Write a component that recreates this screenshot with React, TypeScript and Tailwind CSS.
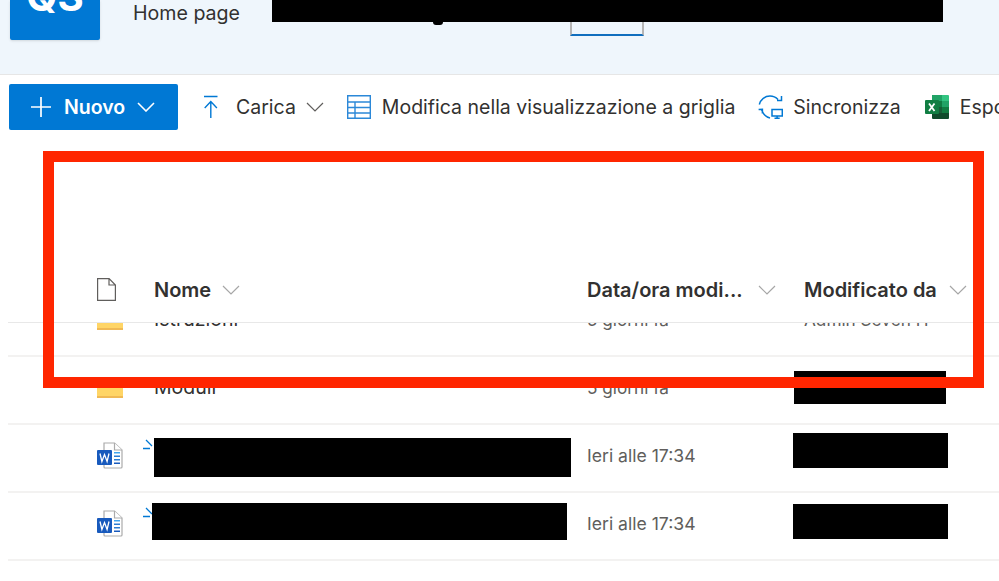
const font = { fontFamily: "Inter, 'Noto Sans', sans-serif" };

const Caret = ({ className = "", width = 1.2 }: { className?: string; width?: number }) => (
  <svg viewBox="0 0 18 10" className={`h-[10px] w-[18px] shrink-0 ${className}`} fill="none" stroke="currentColor" strokeWidth={width}>
    <path d="M1 1l8 8 8-8" />
  </svg>
);

const PlusIcon = () => (
  <svg viewBox="0 0 20 20" className="h-[20px] w-[20px] shrink-0" fill="none" stroke="#fff" strokeWidth="1.7">
    <path d="M10 0v20M0 10h20" />
  </svg>
);

const UploadIcon = () => (
  <svg viewBox="0 0 16 24" className="h-[24px] w-[16px] shrink-0" fill="none" stroke="#0078d4" strokeWidth="1.4">
    <path d="M1 1.500h13.500M7.800 23V6.500M1.700 13l6.100-6.500 6.100 6.500" />
  </svg>
);

const GridIcon = () => (
  <svg viewBox="0 0 24 24" className="h-[24px] w-[24px] shrink-0" fill="none" stroke="#2b88d8" strokeWidth="1.400">
    <path d="M.7.7h22.600v22.600H.7zM.7 7h22.600M.7 12.500h22.600M.7 18h22.600M8 7v16.300" />
  </svg>
);

const SyncIcon = () => (
  <svg viewBox="0 0 25 24" className="h-[24px] w-[25px] shrink-0" fill="none" stroke="#0078d4" strokeWidth="1.500">
    <path d="M1.300 9.500C2.600 4.300 7 1 12 1c3.200 0 5.800 1.200 8 3.500M23.500 1v4.500h-4.500M.6 14.500l3.800-.2v4.200M3.700 15c1.500 4 4.200 7 8.300 8" />
    <path d="M14 14.500h10.300v6.500H14zM19.100 21v2.500M16.500 23.300h5.200" />
  </svg>
);

const ExcelIcon = () => (
  <svg viewBox="0 0 24 24" className="h-[24px] w-[24px] shrink-0">
    <path fill="#21a366" d="M7 0h10v6H7z" />
    <path fill="#33c481" d="M17 0h6a1 1 0 0 1 1 1v5h-7z" />
    <path fill="#107c41" d="M7 6h10v6H7z" />
    <path fill="#21a366" d="M17 6h7v6h-7z" />
    <path fill="#185c37" d="M7 12h10v6H7z" />
    <path fill="#107c41" d="M17 12h7v6h-7z" />
    <path fill="#0f4a2b" d="M7 18h17v5a1 1 0 0 1-1 1H8a1 1 0 0 1-1-1z" />
    <rect y="5" width="14" height="14" rx="1" fill="#117e43" />
    <path fill="none" stroke="#fff" strokeWidth="1.800" d="M4 8.500l5.500 7.500M9.500 8.500L4 16" />
  </svg>
);

const WordIcon = () => (
  <svg viewBox="0 0 26 27" className="h-[27px] w-[26px]" fill="none">
    <path d="M7 1h10.500L25 8v17a1 1 0 0 1-1 1H8a1 1 0 0 1-1-1z" fill="#fff" stroke="#ababab" strokeWidth="1.200" />
    <path d="M17.500 1v7H25" fill="#fff" stroke="#ababab" strokeWidth="1.200" />
    <path d="M17 10h6v1.500h-6z" fill="#41a5ee" />
    <path d="M17 13.500h6V15h-6zM17 17h6v1.500h-6z" fill="#2b7cd3" />
    <path d="M17 20.500h6V22h-6z" fill="#185abd" />
    <rect y="8" width="15" height="15" rx="1" fill="#185abd" />
    <path d="M3 11.500l1.900 8 2.600-7 2.600 7 1.900-8" stroke="#fff" strokeWidth="1.300" />
  </svg>
);

const FolderIcon = () => (
  <div className="mb-[6px] ml-[89px] flex h-[26px] w-[26px] flex-col justify-end overflow-hidden">
    <div className="h-[19px] rounded-t-[2px] border-b-2 border-[#f0b954] bg-[#ffd566]" />
  </div>
);

const NewMark = () => (
  <svg viewBox="0 0 12 12" className="absolute left-[135px] top-[13px] h-[12px] w-[12px]" fill="none" stroke="#0078d4" strokeWidth="1.300">
    <path d="M0 10.500h7M3 2l6 6" />
  </svg>
);

const Redact = ({ className }: { className: string }) => <div className={`absolute bg-black ${className}`} />;

const rows = [
  { kind: "folder", name: "Istruzioni", date: "5 giorni fa", author: "Admin Seven H" },
  { kind: "folder", name: "Moduli", date: "5 giorni fa", author: "" },
  { kind: "word", name: "", date: "Ieri alle 17:34", author: "" },
  { kind: "word", name: "", date: "Ieri alle 17:34", author: "" },
];

export default function App() {
  return (
    <div style={font} className="relative h-[581px] w-[999px] overflow-hidden bg-white text-[#323130]">
      <header className="relative flex h-[75px] items-start border-b border-[#e6e6e6] bg-[#eff6fc]">
        <div className="ml-[10px] flex h-[40px] w-[90px] items-end justify-center overflow-hidden rounded-b-[2px] bg-[#0078d4] pb-[23px] shadow-sm">
          <span className="text-[40px] font-bold leading-none text-white">QS</span>
        </div>
        <span className="ml-[33px] mt-[1px] text-[19.6px] leading-[24px]">Home page</span>
        <div className="ml-[330px] h-[36px] w-[74px] border-x-2 border-b-2 border-x-[#b5b5b5] border-b-[#106ebe]" />
        <Redact className="left-[272px] top-0 h-[22px] w-[671px]" />
        <Redact className="left-[433px] top-[22px] h-[3px] w-[10px] rounded-b-full" />
      </header>

      <div className="flex h-[64px] items-center whitespace-nowrap pl-[9px] text-[19.5px]">
        <button className="flex h-[46px] w-[169px] shrink-0 items-center rounded-[2px] bg-[#0078d4] pl-[22px] font-semibold text-white">
          <PlusIcon />
          <span className="ml-[13px] mt-[2px]">Nuovo</span>
          <Caret className="ml-[12px]" width={1.6} />
        </button>
        <div className="ml-[25px] flex shrink-0 items-center">
          <UploadIcon />
          <span className="ml-[17px] mt-[2px]">Carica</span>
          <Caret className="ml-[10px] text-[#605e5c]" />
        </div>
        <div className="ml-[23px] flex shrink-0 items-center">
          <GridIcon />
          <span className="ml-[11px] mt-[2px]">Modifica nella visualizzazione a griglia</span>
        </div>
        <div className="ml-[23px] flex shrink-0 items-center">
          <SyncIcon />
          <span className="ml-[10px] mt-[2px]">Sincronizza</span>
        </div>
        <div className="ml-[24px] flex shrink-0 items-center">
          <ExcelIcon />
          <span className="ml-[11px] mt-[2px]">Esporta</span>
        </div>
      </div>

      <main className="pl-[8px]">
        <div className="relative z-10 grid h-[184px] grid-cols-[146px_433px_217px_1fr] items-end border-b border-[#e8e8e8] bg-white pb-[18px] text-[20px] font-semibold leading-[28px]">
          <svg viewBox="0 0 19 23" className="mb-[3px] ml-[89px] h-[23px] w-[19px]" fill="none" stroke="#605e5c" strokeWidth="1.200">
            <path d="M.6.6h11.500L18.400 7v15.400H.6zM12 .6V7h6.400" />
          </svg>
          <div className="flex items-center">
            Nome
            <Caret className="ml-[11px] text-[#a6a6a6]" />
          </div>
          <div className="flex items-center">
            Data/ora modi...
            <Caret className="ml-[15px] text-[#a6a6a6]" />
          </div>
          <div className="flex items-center">
            Modificato da
            <Caret className="ml-[12px] text-[#a6a6a6]" />
          </div>
        </div>

        <div className="-mt-[34px]">
          {rows.map((row, i) => (
            <div key={i} className="relative grid h-[68px] grid-cols-[146px_433px_217px_1fr] items-center border-b-2 border-[#f3f2f1] pb-[4px]">
              {row.kind === "folder" ? (
                <FolderIcon />
              ) : (
                <div className="mb-[2px] ml-[89px]">
                  <WordIcon />
                </div>
              )}
              <div className="text-[19.5px]">{row.name}</div>
              <div className={row.kind === "folder" ? "text-[17.2px] text-[#605e5c]" : "text-[17.6px] text-[#605e5c]"}>{row.date}</div>
              <div className="text-[17.2px] text-[#605e5c]">{row.author}</div>
              {row.kind === "word" && <NewMark />}
              {i === 1 && <Redact className="left-[786px] top-[14px] h-[33px] w-[152px]" />}
              {i === 2 && <Redact className="left-[146px] top-[13px] h-[39px] w-[417px]" />}
              {i === 2 && <Redact className="left-[785px] top-[8px] h-[35px] w-[155px]" />}
              {i === 3 && <Redact className="left-[144px] top-[10px] h-[37px] w-[415px]" />}
              {i === 3 && <Redact className="left-[785px] top-[11px] h-[35px] w-[155px]" />}
            </div>
          ))}
        </div>
      </main>

      <div className="absolute left-[43px] top-[151px] z-20 h-[237px] w-[941px] border-[11px] border-[#ff2600]" />
    </div>
  );
}
